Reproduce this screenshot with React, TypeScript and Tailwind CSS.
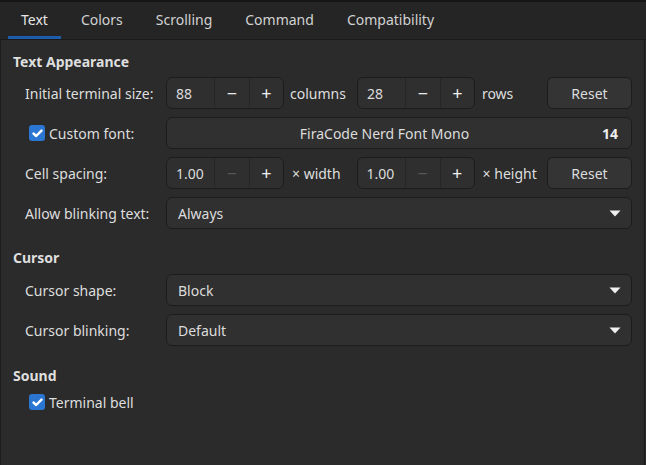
import React from "react";

const Check = () => (
  <span className="w-4 h-4 rounded-[3px] bg-[#2a76d2] flex items-center justify-center shrink-0">
    <svg width="11" height="9" viewBox="0 0 11 9">
      <path d="M1.5 4.5 L4.2 7 L9.5 1.6" stroke="#fff" strokeWidth="2.4" fill="none" strokeLinecap="round" strokeLinejoin="round" />
    </svg>
  </span>
);

const Arrow = () => (
  <svg width="12" height="7" viewBox="0 0 12 7" className="shrink-0">
    <path d="M0.5 0.5 L11.5 0.5 L6 6.5 Z" fill="#f0f0f0" />
  </svg>
);

const Spin = ({ value, minusOff }: { value: string; minusOff?: boolean }) => (
  <div className="flex h-8 w-[118px] rounded-[6px] border border-[#1c1c1c] bg-[#2f2f2f] text-[#dcdcdc]">
    <div className="w-[47px] pl-[9px] flex items-center">{value}</div>
    <div className={`w-[35px] flex items-center justify-center border-l border-[#262626] text-[18px] ${minusOff ? "text-[#565656]" : "text-[#e8e8e8]"}`}>
      −
    </div>
    <div className="flex-1 flex items-center justify-center border-l border-[#262626] text-[18px] text-[#f0f0f0]">+</div>
  </div>
);

const ResetBtn = () => (
  <button className="ml-auto w-[85px] h-8 rounded-[6px] border border-[#1c1c1c] bg-[#343434] text-[#dcdcdc]">Reset</button>
);

const Dropdown = ({ value }: { value: string }) => (
  <div className="flex-1 h-8 flex items-center justify-between pl-[11px] pr-[10px] rounded-[6px] border border-[#1c1c1c] bg-[#303030] text-[#dcdcdc]">
    <span>{value}</span>
    <Arrow />
  </div>
);

const Row = ({ label, children }: { label: React.ReactNode; children: React.ReactNode }) => (
  <div className="flex items-center h-8">
    <div className="w-[165px] pl-[24px] shrink-0 flex items-center">{label}</div>
    <div className="flex-1 flex items-center pr-[12px]">{children}</div>
  </div>
);

const tabs = ["Text", "Colors", "Scrolling", "Command", "Compatibility"];

export default function App() {
  return (
    <div
      className="w-[646px] h-[465px] flex flex-col bg-[#2b2b2b] text-[14px] text-[#dedede] overflow-hidden border-t-2 border-[#161616]"
      style={{ fontFamily: '"Noto Sans", sans-serif' }}
    >
      {/* tabs */}
      <div className="h-[38px] flex gap-[7px] bg-[#252525] border-b border-[#1a1a1a] pl-[8px] shrink-0">
        {tabs.map((t, i) => (
          <div
            key={t}
            className={`px-[13px] flex items-center border-b-[3px] ${i === 0 ? "border-[#1d5bab] text-[#e6e6e6]" : "border-transparent text-[#d2d2d2]"}`}
          >
            {t}
          </div>
        ))}
      </div>

      <div className="flex-1 flex border-l border-[#1e1e1e]">
        <div className="flex-1 flex flex-col border-r border-[#1a1a1a]">
          <div className="pl-[12px] mt-[11px] h-5 font-bold">Text Appearance</div>
          <div className="mt-[6px] flex flex-col gap-2">
            <Row label="Initial terminal size:">
              <Spin value="88" />
              <span className="ml-[6px] mr-[11px]">columns</span>
              <Spin value="28" />
              <span className="ml-[7px]">rows</span>
              <ResetBtn />
            </Row>
            <Row
              label={
                <span className="flex items-center gap-[4px] pl-[4px]">
                  <Check />
                  Custom font:
                </span>
              }
            >
              <div className="flex-1 h-8 flex items-center rounded-[6px] border border-[#1c1c1c] bg-[#303030] text-[#dcdcdc]">
                <span className="flex-1 text-center">FiraCode Nerd Font Mono</span>
                <span className="font-bold pr-[13px] text-[#ececec]">14</span>
              </div>
            </Row>
            <Row label="Cell spacing:">
              <Spin value="1.00" minusOff />
              <span className="ml-[8px] mr-[16px]">× width</span>
              <Spin value="1.00" minusOff />
              <span className="ml-[8px]">× height</span>
              <ResetBtn />
            </Row>
            <Row label="Allow blinking text:">
              <Dropdown value="Always" />
            </Row>
          </div>

          <div className="pl-[12px] mt-[18px] h-5 font-bold">Cursor</div>
          <div className="mt-[7px] flex flex-col gap-2">
            <Row label="Cursor shape:">
              <Dropdown value="Block" />
            </Row>
            <Row label="Cursor blinking:">
              <Dropdown value="Default" />
            </Row>
          </div>

          <div className="pl-[12px] mt-[19px] h-5 font-bold">Sound</div>
          <div className="mt-[7px] h-5 pl-[28px] flex items-center gap-[4px]">
            <Check />
            Terminal bell
          </div>
        </div>
        <div className="w-[1px]" />
      </div>
    </div>
  );
}
